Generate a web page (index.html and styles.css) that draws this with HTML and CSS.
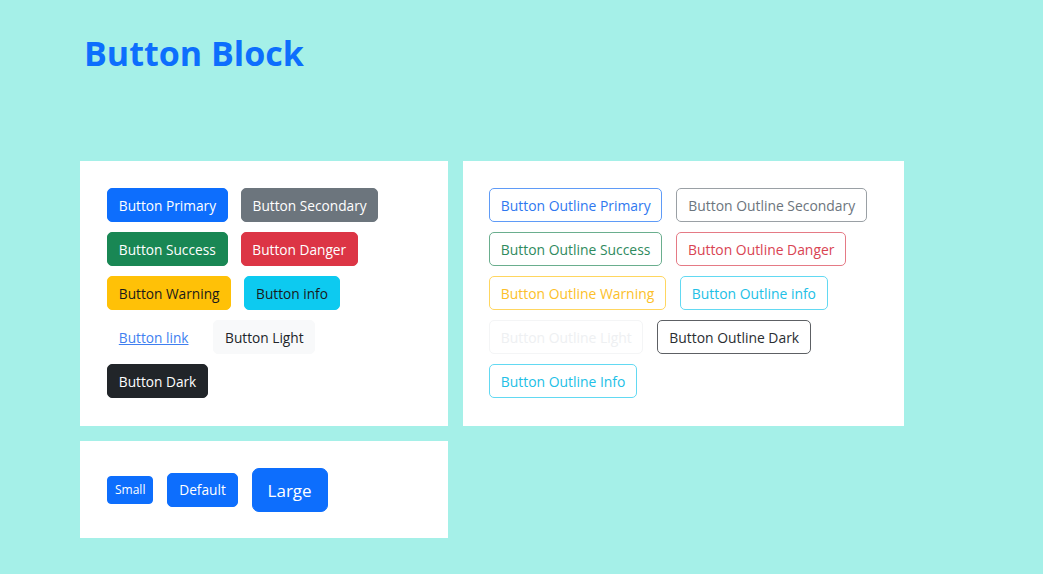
FILE: index.html
```html
<!DOCTYPE html>
<html lang="en">
<head>
<meta charset="utf-8">
<title>Button Block</title>
<link rel="stylesheet" href="styles.css">
</head>
<body>
<div class="page">
  <h1 class="title">Button Block</h1>
  <div class="grid">
    <section class="card card-solid">
      <div class="btn-row">
        <button class="btn btn-primary">Button Primary</button>
        <button class="btn btn-secondary">Button Secondary</button>
      </div>
      <div class="btn-row">
        <button class="btn btn-success">Button Success</button>
        <button class="btn btn-danger">Button Danger</button>
      </div>
      <div class="btn-row">
        <button class="btn btn-warning">Button Warning</button>
        <button class="btn btn-info">Button info</button>
      </div>
      <div class="btn-row">
        <a class="btn btn-link" href="#">Button link</a>
        <button class="btn btn-light">Button Light</button>
      </div>
      <div class="btn-row">
        <button class="btn btn-dark">Button Dark</button>
      </div>
    </section>
    <section class="card card-outline">
      <div class="btn-row">
        <button class="btn btn-o-primary">Button Outline Primary</button>
        <button class="btn btn-o-secondary">Button Outline Secondary</button>
      </div>
      <div class="btn-row">
        <button class="btn btn-o-success">Button Outline Success</button>
        <button class="btn btn-o-danger">Button Outline Danger</button>
      </div>
      <div class="btn-row">
        <button class="btn btn-o-warning">Button Outline Warning</button>
        <button class="btn btn-o-info">Button Outline info</button>
      </div>
      <div class="btn-row">
        <button class="btn btn-o-light">Button Outline Light</button>
        <button class="btn btn-o-dark">Button Outline Dark</button>
      </div>
      <div class="btn-row">
        <button class="btn btn-o-info">Button Outline Info</button>
      </div>
    </section>
    <section class="card card-sizes">
      <button class="btn btn-primary btn-sm">Small</button>
      <button class="btn btn-primary">Default</button>
      <button class="btn btn-primary btn-lg">Large</button>
    </section>
  </div>
</div>
</body>
</html>
```
FILE: styles.css
```css
* { box-sizing: border-box; }
html, body { margin: 0; padding: 0; }
body {
  background: #a5f0e8;
  font-family: "Open Sans", "Noto Sans", sans-serif;
  width: 1043px;
  height: 574px;
  overflow: hidden;
}
.page {
  padding: 0 0 0 80px;
}
.title {
  margin: 0;
  padding: 31px 0 0 4px;
  height: 161px;
  font-size: 34px;
  line-height: 44px;
  font-weight: 700;
  color: #0d6efd;
}
.grid {
  display: grid;
  grid-template-columns: 368px 441px;
  grid-template-rows: 265px 97px;
  gap: 15px;
}
.card {
  background: #ffffff;
  padding: 27px;
}
.card-solid, .card-outline {
  display: flex;
  flex-direction: column;
  gap: 10px;
}
.card-outline { padding-left: 26px; }
.btn-row {
  display: flex;
  gap: 13px;
}
.card-outline .btn-row { gap: 14px; }
.card-outline .btn { font-size: 13.9px; }
.card-sizes {
  display: flex;
  align-items: center;
  gap: 14px;
}
.btn {
  display: inline-flex;
  align-items: center;
  justify-content: center;
  height: 34px;
  padding: 1px 10.8px 0;
  border: 1px solid transparent;
  border-radius: 5px;
  font-family: inherit;
  font-size: 13.7px;
  line-height: 1;
  white-space: nowrap;
  background: transparent;
  cursor: pointer;
  text-decoration: none;
}
.btn-sm { height: 28px; padding: 0 7px; font-size: 12px; border-radius: 4px; }
.btn-lg { height: 44px; padding: 1px 15px 0; font-size: 17px; border-radius: 7px; }

.btn-primary { background: #0d6efd; border-color: #0d6efd; color: #fff; }
.btn-secondary { background: #6c757d; border-color: #6c757d; color: #fff; }
.btn-success { background: #198754; border-color: #198754; color: #fff; }
.btn-danger { background: #dc3545; border-color: #dc3545; color: #fff; }
.btn-warning { background: #ffc107; border-color: #ffc107; color: #1a1a1a; }
.btn-info { background: #0dcaf0; border-color: #0dcaf0; color: #1a1a1a; }
.btn-light { background: #f8f9fa; border-color: #f8f9fa; color: #212529; }
.btn-dark { background: #212529; border-color: #212529; color: #fff; }
.btn-link { color: #3f7ff0; text-decoration: underline; }

.btn-o-primary { border-color: #5f9bf7; color: #2f78f0; }
.btn-o-secondary { border-color: #9aa0a5; color: #6c757d; }
.btn-o-success { border-color: #6aae8e; color: #2f8a5e; }
.btn-o-danger { border-color: #e57a85; color: #d94452; }
.btn-o-warning { border-color: #ffd660; color: #fcbf2a; }
.btn-o-info { border-color: #62d9f2; color: #22c0e6; }
.btn-o-light { border-color: #f4f5f6; color: #eef0f2; }
.btn-o-dark { border-color: #5d6064; color: #2a2d31; }
```
